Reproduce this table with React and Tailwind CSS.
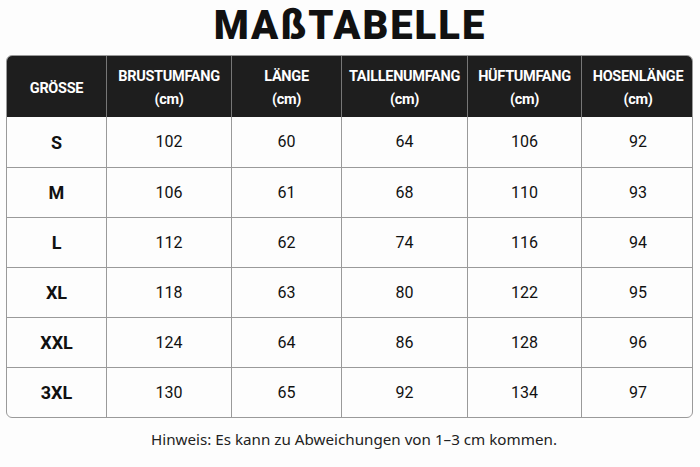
import React from "react";

const cols = [
  { label: "GRÖSSE", unit: null },
  { label: "BRUSTUMFANG", unit: "(cm)" },
  { label: "LÄNGE", unit: "(cm)" },
  { label: "TAILLENUMFANG", unit: "(cm)" },
  { label: "HÜFTUMFANG", unit: "(cm)" },
  { label: "HOSENLÄNGE", unit: "(cm)" },
];

const rows = [
  ["S", 102, 60, 64, 106, 92],
  ["M", 106, 61, 68, 110, 93],
  ["L", 112, 62, 74, 116, 94],
  ["XL", 118, 63, 80, 122, 95],
  ["XXL", 124, 64, 86, 128, 96],
  ["3XL", 130, 65, 92, 134, 97],
];

const grid = "grid grid-cols-[99px_125px_110px_126px_114px_113px]";

export default function App() {
  return (
    <div className="w-[700px] h-[467px] bg-[#fdfdfd] font-['Roboto',sans-serif] text-[#111]">
      <h1 className="pt-[6px] h-[55px] text-center text-[40px] leading-[40px] font-black tracking-[2px] text-[#111]">
        MAßTABELLE
      </h1>

      <div className="ml-[6px] w-[687px] rounded-[6px] border border-[#9a9a9a] overflow-hidden">
        {/* Header */}
        <div className={`${grid} h-[61px] bg-[#1e1e1e] text-white`}>
          {cols.map((c, i) => (
            <div
              key={c.label}
              className={`flex flex-col items-center justify-center pt-[3px] text-[14.5px] font-bold leading-[23px] tracking-[-0.3px] ${
                i > 0 ? "border-l border-[#777]" : ""
              }`}
            >
              <span>{c.label}</span>
              {c.unit && <span>{c.unit}</span>}
            </div>
          ))}
        </div>

        {/* Rows */}
        {rows.map((r, ri) => (
          <div
            key={r[0]}
            className={`${grid} h-[50px] ${ri > 0 ? "border-t border-[#9a9a9a]" : ""}`}
          >
            {r.map((v, i) => (
              <div
                key={i}
                className={`flex items-center justify-center ${
                  i > 0 ? "border-l border-[#9a9a9a] text-[16px]" : "text-[18px] font-bold"
                }`}
              >
                {v}
              </div>
            ))}
          </div>
        ))}
      </div>

      <p className="mt-[10px] pl-[8px] text-center text-[15.2px] font-['Noto_Sans',sans-serif] text-[#222]">
        Hinweis: Es kann zu Abweichungen von 1–3 cm kommen.
      </p>
    </div>
  );
}
